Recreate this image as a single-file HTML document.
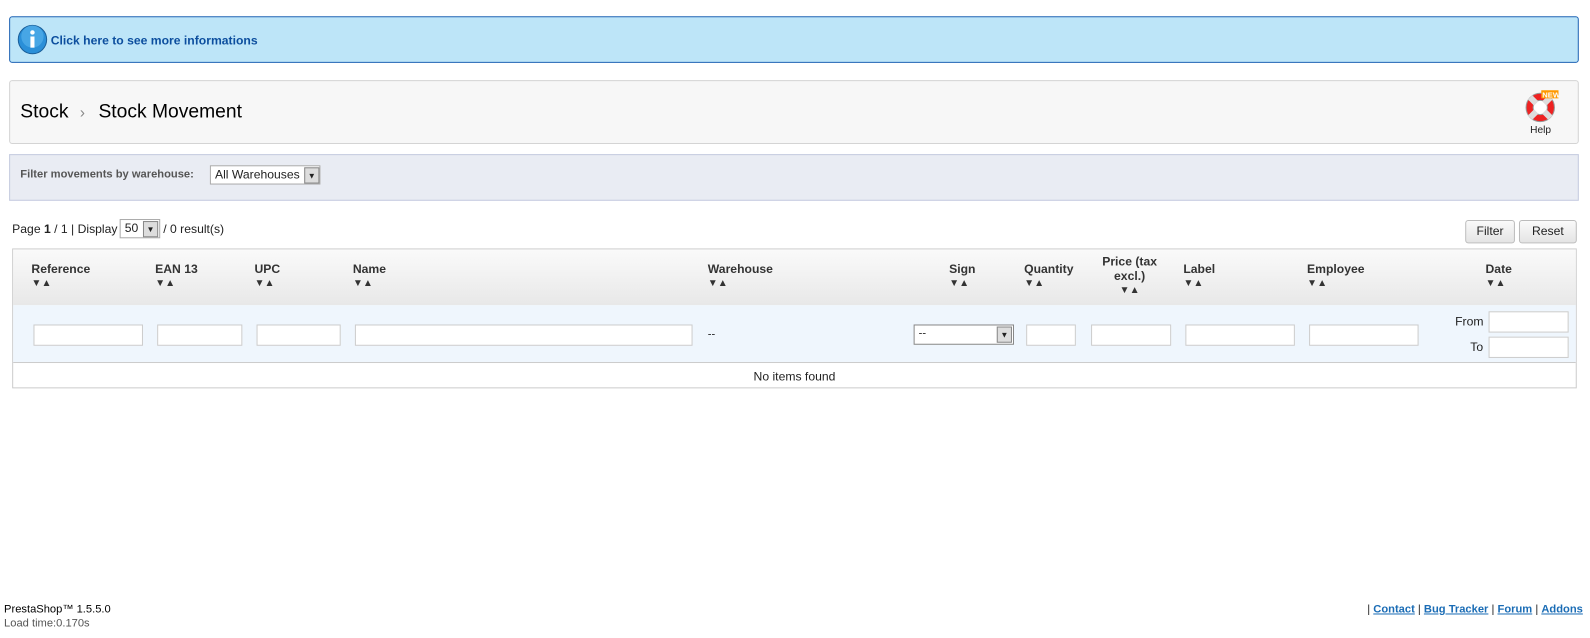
<!DOCTYPE html>
<html><head><meta charset="utf-8"><style>
*{box-sizing:border-box}
body{margin:0;width:1590px;height:638px;overflow:hidden;position:relative;background:#fff;font-family:"Liberation Sans",Arial,sans-serif;font-size:12px;color:#222}
#w{position:absolute;left:0;top:0;width:1568px;height:629px;transform:scale(1.014);transform-origin:0 0}
.a{position:absolute}
.inp{position:absolute;height:21px;border:1px solid #ccc;background:#fff;top:320px}
.h{position:absolute;top:258px;font-weight:bold;font-size:12px;color:#333}
.ar{font-size:10px;display:block;margin-top:2px;letter-spacing:0}
.btn{position:absolute;top:217px;height:23px;border:1px solid #bbb;border-radius:3px;background:linear-gradient(#fafafa,#e4e4e4);font-size:12px;text-align:center;line-height:21px}
a{color:#1a6cb5;font-weight:bold;text-decoration:underline}
</style></head><body><div id="w">
<div class="a" style="left:9px;top:16px;width:1548px;height:46px;background:#bde5f8;border:1px solid #1e63b4;border-radius:3px"></div>
<svg class="a" style="left:17px;top:24px" width="30" height="30"><circle cx="15" cy="15" r="14" fill="#2a8fd8" stroke="#1a5f9a"/><circle cx="15" cy="12" r="11" fill="#5cb6ef" opacity=".6"/><rect x="13" y="12" width="4" height="11" fill="#fff"/><circle cx="15" cy="8" r="2.2" fill="#fff"/></svg>
<div class="a" style="left:50px;top:33px;font-weight:bold;color:#0c4e9e;font-size:12px">Click here to see more informations</div>

<div class="a" style="left:9px;top:79px;width:1548px;height:63px;background:#f7f7f7;border:1px solid #d4d4d4;border-radius:3px"></div>
<div class="a" style="left:20px;top:100px;font-size:19px;color:#000">Stock <span style="color:#888;font-size:15px;margin:0 8px 0 6px">&#8250;</span> Stock Movement</div>
<svg class="a" style="left:1503px;top:88px" width="34" height="34"><circle cx="16" cy="18" r="14" fill="#e22" stroke="#999"/><circle cx="16" cy="18" r="7" fill="#fff" stroke="#999"/><path d="M6 8l6 6M26 8l-6 6M6 28l6-6M26 28l-6-6" stroke="#ddd" stroke-width="6"/><rect x="17" y="1" width="17" height="8" fill="#f90"/><text x="18" y="8" font-size="7.5" fill="#fff" font-weight="bold" font-family="Liberation Sans">NEW</text></svg>
<div class="a" style="left:1509px;top:123px;font-size:10px">Help</div>

<div class="a" style="left:9px;top:152px;width:1548px;height:46px;background:#e9ecf3;border:1px solid #c5cbe0"></div>
<div class="a" style="left:20px;top:166px;font-weight:bold;color:#555;font-size:11px">Filter movements by warehouse:</div>
<div class="a" style="left:207px;top:163px;width:109px;height:19px;border:1px solid #aaa;background:#fff;font-size:12px;padding:1px 4px">All Warehouses</div>
<div class="a" style="left:300px;top:165px;width:15px;height:16px;background:#ddd;border:1px solid #888;font-size:8px;text-align:center;line-height:15px">&#9660;</div>

<div class="a" style="left:12px;top:219px;font-size:12px">Page <b>1</b> / 1 | Display</div>
<div class="a" style="left:118px;top:216px;width:40px;height:19px;border:1px solid #aaa;background:#fff;padding:1px 4px">50</div>
<div class="a" style="left:141px;top:218px;width:15px;height:16px;background:#ddd;border:1px solid #888;font-size:8px;text-align:center;line-height:15px">&#9660;</div>
<div class="a" style="left:161px;top:219px">/ 0 result(s)</div>
<div class="btn" style="left:1445px;width:49px">Filter</div>
<div class="btn" style="left:1498px;width:57px">Reset</div>

<div class="a" style="left:12px;top:245px;width:1543px;height:138px;border:1px solid #ccc"></div>
<div class="a" style="left:13px;top:246px;width:1541px;height:55px;background:linear-gradient(#fafafa,#e8e8e8)"></div>
<div class="a" style="left:13px;top:301px;width:1541px;height:57px;background:#eff6fd;border-bottom:1px solid #ccc"></div>
<div class="h" style="left:31px">Reference<span class="ar">▼▲</span></div>
<div class="h" style="left:153px">EAN 13<span class="ar">▼▲</span></div>
<div class="h" style="left:251px">UPC<span class="ar">▼▲</span></div>
<div class="h" style="left:348px">Name<span class="ar">▼▲</span></div>
<div class="h" style="left:698px">Warehouse<span class="ar">▼▲</span></div>
<div class="h" style="left:936px">Sign<span class="ar">▼▲</span></div>
<div class="h" style="left:1010px">Quantity<span class="ar">▼▲</span></div>
<div class="h" style="left:1080px;top:251px;text-align:center;width:68px;line-height:14px">Price (tax excl.)<span class="ar" style="margin-top:1px">▼▲</span></div>
<div class="h" style="left:1167px">Label<span class="ar">▼▲</span></div>
<div class="h" style="left:1289px">Employee<span class="ar">▼▲</span></div>
<div class="h" style="left:1465px">Date<span class="ar">▼▲</span></div>

<div class="inp" style="left:33px;width:108px"></div>
<div class="inp" style="left:155px;width:84px"></div>
<div class="inp" style="left:253px;width:83px"></div>
<div class="inp" style="left:350px;width:333px"></div>
<div class="a" style="left:698px;top:324px;font-size:11px">--</div>
<div class="inp" style="left:901px;width:99px;height:20px;border-color:#888;font-size:11px;padding:2px 4px">--</div>
<div class="a" style="left:983px;top:322px;width:15px;height:16px;background:#ddd;border:1px solid #888;font-size:8px;text-align:center;line-height:15px">&#9660;</div>
<div class="inp" style="left:1012px;width:49px"></div>
<div class="inp" style="left:1076px;width:79px"></div>
<div class="inp" style="left:1169px;width:108px"></div>
<div class="inp" style="left:1291px;width:108px"></div>
<div class="a" style="left:1435px;top:310px">From</div>
<div class="inp" style="left:1468px;top:307px;width:79px"></div>
<div class="a" style="left:1450px;top:335px">To</div>
<div class="inp" style="left:1468px;top:332px;width:79px"></div>
<div class="a" style="left:13px;top:364px;width:1541px;text-align:center">No items found</div>

<div class="a" style="left:4px;top:595px;font-size:11px;color:#000">PrestaShop™ 1.5.5.0</div>
<div class="a" style="left:4px;top:609px;font-size:11px;color:#555">Load time:0.170s</div>
<div class="a" style="right:7px;top:595px;font-size:11px">| <a>Contact</a> | <a>Bug Tracker</a> | <a>Forum</a> | <a>Addons</a></div>
</div></body></html>
